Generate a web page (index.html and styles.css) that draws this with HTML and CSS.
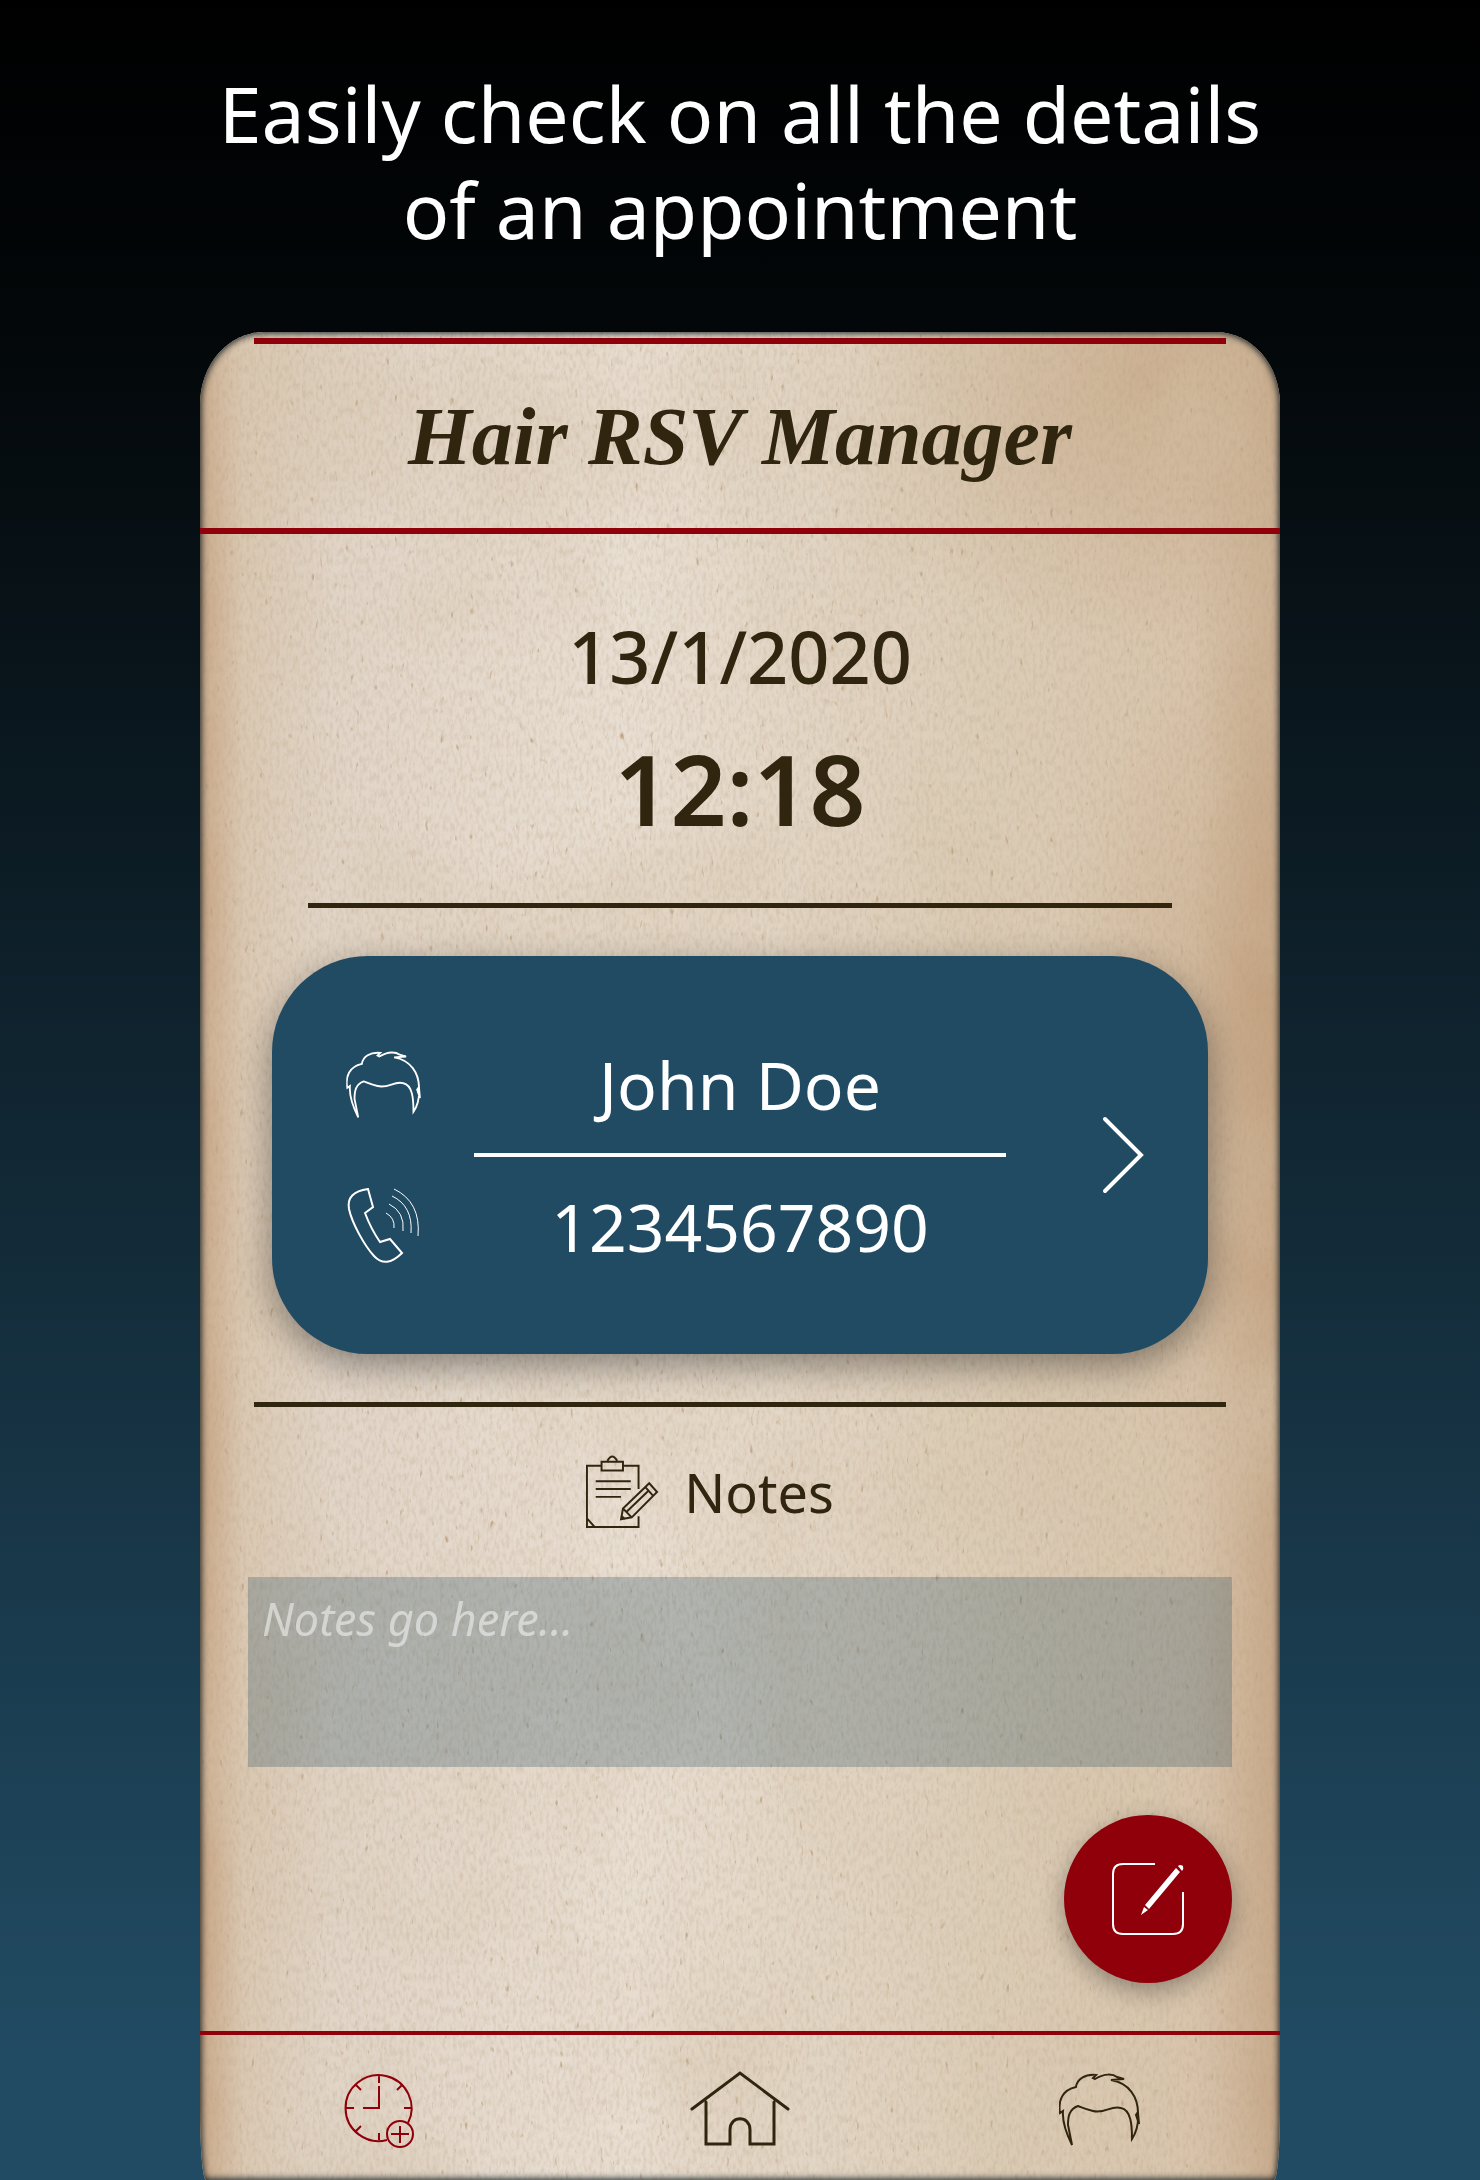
FILE: index.html
```html
<!DOCTYPE html>
<html lang="en">
<head>
<meta charset="utf-8">
<meta name="viewport" content="width=device-width, initial-scale=1">
<title>Hair RSV Manager</title>
<link rel="stylesheet" href="styles.css">
</head>
<body>
<svg class="defs" aria-hidden="true">
  <symbol id="hair" viewBox="0 0 82 76">
    <path d="M13 72C8 62 3 50 4 38L1 40C-1 28 3 17 17 14C18 6 26 1 37 2L34 5L36 6C46 0 54 1 58 4L65 6L52 7C70 10 79 24 79 40L80 51L77 42L79 39C80 52 77 60 73 66C73 52 72 37 62 35C52 32 46 41 34 38C26 36 22 34 19 33C10 36 9 44 9 52Z"/>
  </symbol>
</svg>
<h1 class="headline">Easily check on all the details<br>of an appointment</h1>
<div class="phone">
  <svg class="paper" aria-hidden="true">
    <filter id="fibres" x="0" y="0" width="100%" height="100%">
      <feTurbulence type="fractalNoise" baseFrequency=".3 .12" numOctaves="3" seed="8"/>
      <feColorMatrix values="0 0 0 0 .45  0 0 0 0 .33  0 0 0 0 .2  .6 0 0 0 -.24"/>
    </filter>
    <filter id="stains" x="0" y="0" width="100%" height="100%">
      <feTurbulence type="fractalNoise" baseFrequency=".005 .004" numOctaves="4" seed="5"/>
      <feColorMatrix values="0 0 0 0 .68  0 0 0 0 .56  0 0 0 0 .42  1.1 0 0 0 -.46"/>
    </filter>
    <filter id="flecks" x="0" y="0" width="100%" height="100%">
      <feTurbulence type="fractalNoise" baseFrequency=".2 .08" numOctaves="2" seed="21"/>
      <feColorMatrix values="0 0 0 0 .5  0 0 0 0 .36  0 0 0 0 .22  5 0 0 0 -3.6"/>
    </filter>
    <rect width="100%" height="100%" filter="url(#stains)"/>
    <rect width="100%" height="100%" filter="url(#fibres)"/>
    <rect width="100%" height="100%" filter="url(#flecks)"/>
  </svg>
  <header class="brand"><span>Hair RSV Manager</span></header>
  <main class="details">
    <p class="date">13/1/2020</p>
    <p class="time">12:18</p>
    <hr class="rule rule-short">
    <button class="client" type="button">
      <span class="client-icons">
        <svg class="icon-hair" viewBox="0 0 82 76"><use href="#hair"/></svg>
        <svg class="icon-call" viewBox="0 0 76 78"><path d="M22 2L27 20L19 26Q25 42 34 55L44 52L56 66Q40 82 28 69C18 58 6 36 3 22Q0 5 22 2Z"/><path class="thin" d="M40 26Q49 31 48 41M43 17Q59 25 57 44M46 9Q67 19 65 46M48 2Q75 15 72 49"/></svg>
      </span>
      <span class="client-text">
        <span class="client-name">John Doe</span>
        <span class="client-number">1234567890</span>
      </span>
      <svg class="chevron" viewBox="0 0 42 78"><path d="M3 3L39 39L3 75"/></svg>
    </button>
    <hr class="rule">
    <label class="notes-label" for="notes">
      <svg class="icon-notes" viewBox="0 0 76 76"><path d="M17 11H2V74H55V63M55 35V11H39M17 7H39V16H17ZM23 6Q28-3 33 6M11 27H47M11 35H47M11 43H37M2 65L10 74M66 29L74 38L48 64L37 66L39 55ZM62 33L70 42M39 55L48 64M43 58L66 36M37 62L41 66"/></svg>
      <span>Notes</span>
    </label>
    <textarea class="notes" id="notes" placeholder="Notes go here..."></textarea>
    <button class="edit" type="button" aria-label="Edit appointment">
      <svg viewBox="0 0 74 74"><path d="M44 2H12Q2 2 2 12V62Q2 72 12 72H62Q72 72 72 62V30"/><path class="solid" d="M65 6L69 10L38 47L34 43ZM67 4Q69 2 72 4Q73 7 71 9ZM33 45L37 48L30 53Z"/></svg>
    </button>
  </main>
  <nav class="tabs" aria-label="Main">
    <a class="tab active" href="#new" aria-label="New appointment"><svg class="icon-clock" viewBox="0 0 70 76"><path d="M63 50A33 33 0 1 0 42 67M34 2V10M1 35H9M59 35H67M11 12L16 17M57 12L52 17M11 58L16 53M34 60V67M34 13V35H18"/><circle cx="55" cy="61" r="13"/><path d="M55 53V70M46 61H64"/></svg></a>
    <a class="tab" href="#home" aria-label="Home"><svg class="icon-home" viewBox="0 3 100 78"><path d="M2 39L50 3L98 39M16 32V74H40V60C40 45 60 45 60 60V74H84V32"/></svg></a>
    <a class="tab" href="#clients" aria-label="Clients"><svg class="icon-hair" viewBox="0 0 82 76"><use href="#hair"/></svg></a>
  </nav>
</div>
</body>
</html>
```

FILE: styles.css
```css
:root {
  --ink: #30250f;
  --red: #8f000b;
  --blue: #214b63;
}

* { box-sizing: border-box; }

body {
  margin: 0;
  min-height: 100vh;
  display: flex;
  flex-direction: column;
  background: linear-gradient(#000, #030709 15%, #214b63 94%);
  font-family: "Noto Sans", sans-serif;
  color: var(--ink);
}

p, h1, hr { margin: 0; }
svg { display: block; fill: none; stroke: currentColor; stroke-width: 2; overflow: visible; }
.defs { position: absolute; width: 0; height: 0; }

.headline {
  padding: 66px 16px 74px;
  color: #fff;
  font-size: 77px;
  font-weight: 400;
  line-height: 96px;
  text-align: center;
}

.phone {
  position: relative;
  isolation: isolate;
  flex: 1;
  width: 73%;
  margin: 0 auto;
  display: flex;
  flex-direction: column;
  overflow: hidden;
  border-radius: 64px 64px 6px 6px / 72px 72px 70px 70px;
  background:
    radial-gradient(ellipse 22% 24% at 100% 40%, #b48a6060, transparent),
    radial-gradient(ellipse 30% 14% at 88% 3%, #b48a6060, transparent),
    linear-gradient(90deg, #c8a584 0, #dac8b3 4%, #e1d5c8 12%, #e8ded2 40%, #dccdb8 72%, #d8c4ac 92%, #c6a788);
}

.phone::after {
  content: "";
  position: absolute;
  inset: 0;
  border-radius: inherit;
  box-shadow: inset 0 0 7px 1px #0d1a20;
  pointer-events: none;
  z-index: -1;
}

.paper { position: absolute; inset: 0; width: 100%; height: 100%; z-index: -1; stroke: none; }

.brand {
  height: 202px;
  padding-top: 6px;
  border-bottom: 6px solid var(--red);
  text-align: center;
}

.brand span {
  display: block;
  margin: 0 5%;
  border-top: 6px solid var(--red);
  font: italic 700 82px/186px "Yellowtail", "Brush Script MT", "Z003", "Liberation Serif", cursive;
}

.details { display: flex; flex-direction: column; align-items: center; }

.date { padding-top: 70px; font-size: 72px; font-weight: 500; line-height: 104px; }
.time { padding: 8px 0 43px; font-size: 98px; font-weight: 600; line-height: 144px; }

.rule { width: 90%; height: 5px; border: 0; background: var(--ink); }
.rule-short { width: 80%; }

.client {
  width: 936px;
  max-width: 94%;
  height: 398px;
  margin: 48px 0;
  padding: 0 64px 0 74px;
  display: grid;
  grid-template-columns: 76px auto 86px;
  align-items: center;
  justify-content: space-between;
  border: 0;
  border-radius: 96px;
  background: var(--blue);
  box-shadow: 0 12px 36px #0006;
  color: #fff;
  font: 400 66px/90px "Noto Sans", sans-serif;
}

.client-icons { display: flex; flex-direction: column; gap: 66px; padding-top: 6px; }
.client-icons .icon-hair { width: 76px; height: 70px; }
.icon-call { width: 76px; height: 78px; }
.thin { stroke-width: 1; }
.client-text { width: 532px; display: flex; flex-direction: column; text-align: center; }
.client-name { padding-bottom: 24px; border-bottom: 4px solid #fff; }
.client-number { padding-top: 24px; }
.chevron { width: 42px; height: 78px; justify-self: end; stroke-width: 4; stroke-linecap: round; }

.notes-label {
  display: flex;
  align-items: center;
  gap: 24px;
  margin: 48px 62px 0 0;
  font-size: 54px;
  line-height: 74px;
}

.icon-notes { width: 76px; height: 74px; }

.notes {
  width: 984px;
  max-width: 94%;
  height: 190px;
  margin-top: 48px;
  padding: 12px 14px;
  border: 0;
  resize: none;
  background: #214b6344;
  color: #fff;
  font: italic 400 45px/60px "Noto Sans", sans-serif;
}

.notes::placeholder { color: #fff; opacity: .5; }

.edit {
  width: 168px;
  height: 168px;
  margin: 48px 48px 48px auto;
  display: grid;
  place-items: center;
  border: 0;
  border-radius: 50%;
  background: var(--red);
  box-shadow: 0 8px 24px #0005;
  color: #fff;
}

.edit svg { width: 74px; height: 74px; }
.solid { fill: currentColor; stroke: none; }

.tabs {
  flex: 1;
  display: grid;
  grid-template-columns: repeat(3, 1fr);
  align-items: start;
  justify-items: center;
  padding-top: 38px;
  border-top: 4px solid var(--red);
}

.tab { color: var(--ink); }
.active { color: var(--red); }
.icon-clock { width: 70px; height: 76px; }
.icon-home { width: 100px; height: 78px; stroke-width: 3; stroke-linecap: round; }
.tab .icon-hair { width: 82px; height: 76px; }
```
